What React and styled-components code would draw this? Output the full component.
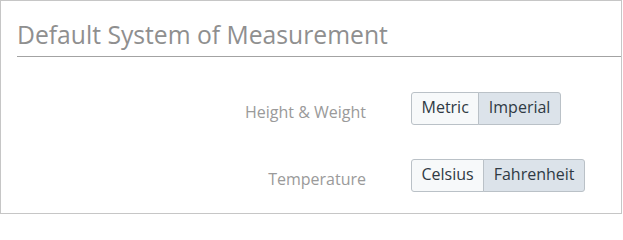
import React, { useState } from "react";
import styled, { createGlobalStyle } from "styled-components";

const GlobalStyle = createGlobalStyle`
  * {
    box-sizing: border-box;
  }

  body {
    margin: 0;
    background: #ffffff;
    font-family: "Open Sans", "DejaVu Sans", sans-serif;
  }
`;

const Panel = styled.div`
  width: 622px;
  height: 214px;
  border: 1px solid #c6c6c6;
  background: #ffffff;
  overflow: hidden;
`;

const Heading = styled.h2`
  margin: 17px 0 0 16px;
  padding: 0 0 4px 0;
  font-size: 24.7px;
  font-weight: 400;
  line-height: 34px;
  color: #8f8f8f;
  border-bottom: 1px solid #a3a3a3;
`;

const Form = styled.div`
  display: flex;
  flex-direction: column;
  gap: 34px;
  padding-top: 35px;
`;

const Row = styled.div`
  display: flex;
  align-items: flex-start;
  gap: 45px;
`;

const Label = styled.div`
  width: 365px;
  padding-top: 9px;
  text-align: right;
  font-size: 16px;
  line-height: 22px;
  color: #9a9a9a;
`;

const Group = styled.div`
  display: flex;
`;

const Toggle = styled.button`
  margin: 0 0 0 -1px;
  padding: 3px 9.5px 6px;
  font-family: inherit;
  font-size: 16px;
  line-height: 22px;
  color: #2f3a44;
  background: ${props => (props.active ? "#dce3ea" : "#f7f9fa")};
  border: 1px solid #bac1c7;
  border-radius: 0;
  cursor: pointer;

  &:first-child {
    margin-left: 0;
    border-radius: 3px 0 0 3px;
  }

  &:last-child {
    border-radius: 0 3px 3px 0;
  }
`;

const settings = [
  { label: "Height & Weight", options: ["Metric", "Imperial"], value: "Imperial" },
  { label: "Temperature", options: ["Celsius", "Fahrenheit"], value: "Fahrenheit" }
];

const App = () => {
  const [values, setValues] = useState(settings.map(s => s.value));

  function choose(i, option) {
    const next = [...values];
    next[i] = option;
    setValues(next);
  }

  return (
    <>
      <GlobalStyle />
      <Panel>
        <Heading>Default System of Measurement</Heading>
        <Form>
          {settings.map((s, i) => (
            <Row key={s.label}>
              <Label>{s.label}</Label>
              <Group>
                {s.options.map(option => (
                  <Toggle
                    key={option}
                    active={values[i] === option}
                    onClick={() => choose(i, option)}
                  >
                    {option}
                  </Toggle>
                ))}
              </Group>
            </Row>
          ))}
        </Form>
      </Panel>
    </>
  );
};

export default App;
